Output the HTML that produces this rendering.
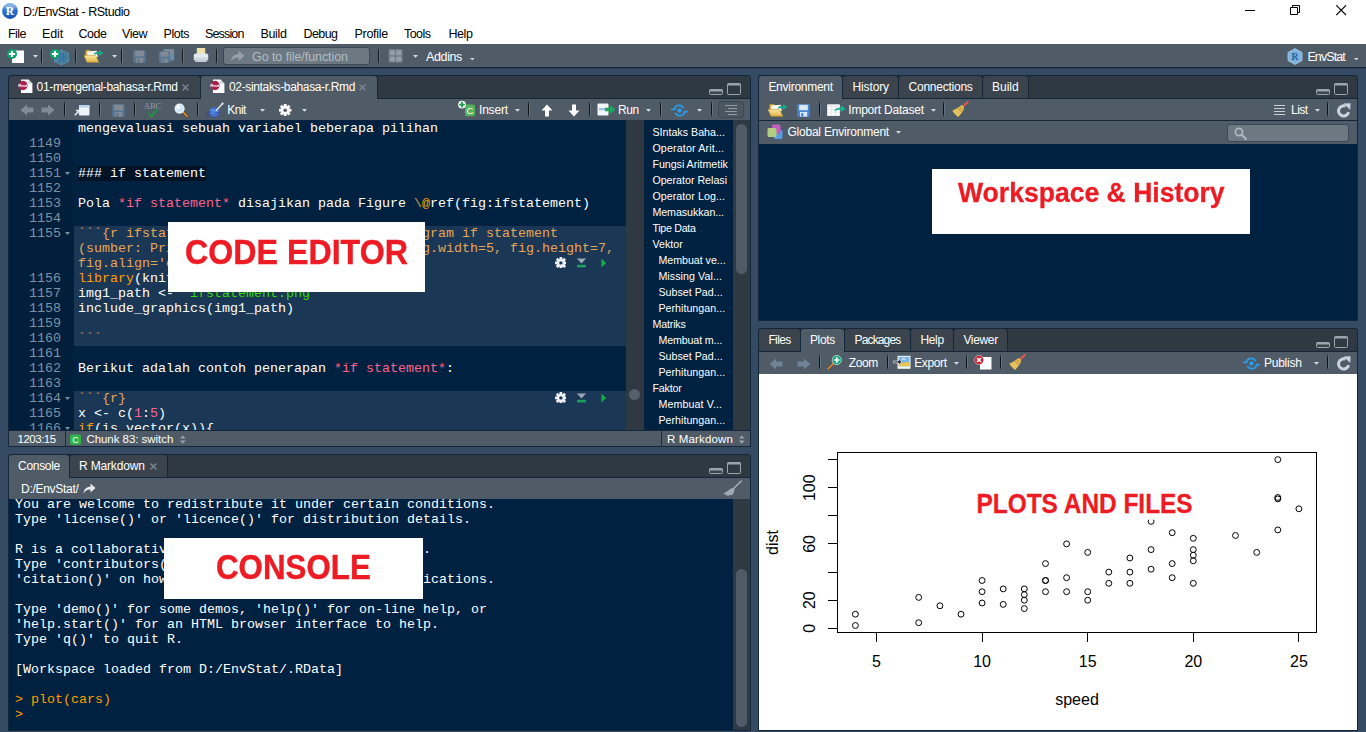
<!DOCTYPE html>
<html lang="id">
<head>
<meta charset="utf-8">
<title>D:/EnvStat - RStudio</title>
<style>
html,body{margin:0;padding:0}
body{width:1366px;height:732px;overflow:hidden;position:relative;background:#344b63;font-family:"Liberation Sans",sans-serif;font-size:12px;color:#fff}
div,span,svg{position:absolute;box-sizing:border-box}
.t{white-space:pre;line-height:16px;height:16px}
#title{left:0;top:0;width:1366px;height:22px;background:#fff;color:#000}
#menu{left:0;top:22px;width:1366px;height:22px;background:#fff;color:#000}
#tb{left:0;top:44px;width:1366px;height:24px;background:#4f5b66;border-bottom:1px solid #10243a;box-shadow:0 1px 0 #2b4058}
.sep{width:2px;height:16px;background:linear-gradient(to right,#0d1318 0,#0d1318 55%,rgba(140,160,180,.35) 55%);-webkit-mask-image:linear-gradient(transparent,#000 20%,#000 80%,transparent);mask-image:linear-gradient(transparent,#000 20%,#000 80%,transparent)}
.panel{background:#2f3941;border:1px solid #14263a;border-radius:2.5px 2.5px 0 0;overflow:hidden}
.tab{top:-1px;height:23px;background:#3b444c;border:1px solid #14263a;border-bottom:none;border-radius:4px 4px 0 0}
.tab.on{background:#4f5b66;height:24px;z-index:2}
.bar{left:0;background:#4f5b66;border-top:1px solid #14263a}
.mono{font-family:"Liberation Mono",monospace;font-size:13.33px;white-space:pre;line-height:15px;height:15px}
.ed{background:#002240;overflow:hidden}
.ln{color:#7f92a3;left:0;width:50px;text-align:right}
.c{left:69px}
.o{color:#e8a556}.k{color:#ff9d00}.p{color:#ff628c}.g{color:#3ad900}
.o,.k,.p,.g,.h,.d{position:static}
.chunk{left:65px;width:552px;background:#1a3755}
.lab{background:#fff;color:#ed1c24;font-weight:bold;text-align:center;white-space:pre}
</style>
</head>
<body>
<div id="title">
<svg style="left:2px;top:3px" width="17" height="17" viewBox="0 0 17 17"><defs><linearGradient id="rg" x1="0" y1="0" x2="0" y2="1"><stop offset="0" stop-color="#7fb6ee"/><stop offset="0.45" stop-color="#2f74d0"/><stop offset="1" stop-color="#1a4fae"/></linearGradient></defs><circle cx="8" cy="8" r="7.9" fill="url(#rg)"/><ellipse cx="8" cy="4.2" rx="5.6" ry="3" fill="#fff" fill-opacity=".22"/><text x="8" y="12.2" text-anchor="middle" font-family="Liberation Serif,serif" font-weight="bold" font-size="11.5" fill="#fff">R</text></svg>
<span class="t" style="left:23px;top:4px;font-size:12.5px;letter-spacing:-0.44px;">D:/EnvStat - RStudio</span>
<svg style="left:1245px;top:4px" width="12" height="12"><path d="M0 6.5H10" stroke="#000" fill="none"/></svg>
<svg style="left:1290px;top:4px" width="12" height="12"><path d="M0.5 3.5H7.5V10.5H0.5ZM2.5 3.5V1.5H9.5V8.5H7.5" stroke="#000" fill="none"/></svg>
<svg style="left:1336px;top:5px" width="11" height="11"><path d="M0.3 0.3L10 10M10 0.3L0.3 10" stroke="#000" fill="none" stroke-width="1.1"/></svg>
</div>
<div id="menu">
<span class="t" style="left:8px;top:4px;font-size:12.5px;letter-spacing:-0.54px;">File</span>
<span class="t" style="left:42px;top:4px;font-size:12.5px;letter-spacing:-0.13px;">Edit</span>
<span class="t" style="left:78.5px;top:4px;font-size:12.5px;letter-spacing:-0.47px;">Code</span>
<span class="t" style="left:122px;top:4px;font-size:12.5px;letter-spacing:-0.47px;">View</span>
<span class="t" style="left:163.5px;top:4px;font-size:12.5px;letter-spacing:-0.46px;">Plots</span>
<span class="t" style="left:205px;top:4px;font-size:12.5px;letter-spacing:-0.85px;">Session</span>
<span class="t" style="left:260.5px;top:4px;font-size:12.5px;letter-spacing:-0.36px;">Build</span>
<span class="t" style="left:303.5px;top:4px;font-size:12.5px;letter-spacing:-0.57px;">Debug</span>
<span class="t" style="left:354.5px;top:4px;font-size:12.5px;letter-spacing:-0.28px;">Profile</span>
<span class="t" style="left:404px;top:4px;font-size:12.5px;letter-spacing:-0.54px;">Tools</span>
<span class="t" style="left:448.5px;top:4px;font-size:12.5px;letter-spacing:-0.43px;">Help</span>
</div>
<div id="tb">
<svg style="left:7px;top:5px" width="18" height="15" viewBox="0 0 18 15"><rect x="5" y="1.5" width="12" height="12.5" fill="#fff"/><circle cx="5" cy="5" r="5" fill="#0fa36b"/><path d="M5 1.9V8.1M1.9 5H8.1" stroke="#fff" stroke-width="1.9"/></svg>
<svg style="left:33px;top:11px" width="5" height="3"><path d="M0 0H5L2.5 2.7Z" fill="#e6e9ec" fill-opacity=".9"/></svg>
<div class="sep" style="left:41px;top:4px;height:16px"></div>
<svg style="left:49px;top:5px" width="21" height="17" viewBox="0 0 21 17"><path d="M12.5 1L19.5 4V12.4L12.5 15.8L5.5 12.4V4Z" fill="#3f9ccb" fill-opacity="0.45" stroke="#58aed6" stroke-opacity="0.8" stroke-width="0.7"/><path d="M5.5 4L12.5 7.2L19.5 4M12.5 7.2V15.8M5.5 12.4L12.5 9.4L19.5 12.4M12.5 1V9.4" stroke="#58aed6" stroke-opacity="0.55" stroke-width="0.6" fill="none"/><text x="9.8" y="12.2" font-family="Liberation Serif,serif" font-size="9.5" fill="#2a67b0">R</text><circle cx="6" cy="5" r="5" fill="#0fa36b"/><path d="M6 1.9V8.1M2.9 5H9.1" stroke="#fff" stroke-width="1.9"/></svg>
<div class="sep" style="left:75px;top:4px;height:16px"></div>
<svg style="left:83px;top:5px" width="21" height="14" viewBox="0 0 21 14"><defs><linearGradient id="fg83" x1="0" y1="0" x2="0" y2="1"><stop offset="0" stop-color="#f8e9a0"/><stop offset="1" stop-color="#e2b644"/></linearGradient></defs><path d="M2.6 2.2Q2.6 1.2 3.6 1.2H7L8.4 2.6H14V9H2.6Z" fill="#d9b24a" stroke="#b98f28" stroke-width="0.5"/><path d="M4.2 2.4L13.6 1.8L14.8 8H4.2Z" fill="#f6f6f2"/><path d="M1 6.4H12.6L15.8 13.2H4Z" fill="url(#fg83)" stroke="#c29a30" stroke-width="0.6"/><path d="M10.6 5.4C11.2 3.4 13.4 2.6 16 2.8V0.9L20.6 4L16 7.2V5.1C13.8 4.8 12 5.2 10.6 5.4Z" fill="#19a884"/></svg>
<svg style="left:112px;top:11px" width="5" height="3"><path d="M0 0H5L2.5 2.7Z" fill="#e6e9ec" fill-opacity=".9"/></svg>
<div class="sep" style="left:121px;top:4px;height:16px"></div>
<svg style="opacity:.85;left:133px;top:6px" width="13" height="13" viewBox="0 0 13 13"><path d="M0.3 1.3Q0.3 0.3 1.3 0.3H11.7Q12.7 0.3 12.7 1.3V11.7Q12.7 12.7 11.7 12.7H1.3Q0.3 12.7 0.3 11.7Z" fill="#5a7b9a"/><rect x="2.2" y="0.8" width="8.6" height="5.4" fill="#8b949d"/><rect x="3" y="8" width="7.2" height="4.7" fill="#8b949d"/><rect x="4.2" y="9" width="2.2" height="3.7" fill="#5a7b9a"/></svg>
<svg style="left:158px;top:4px;opacity:.85" width="17" height="15" viewBox="0 0 17 15"><rect x="5.6" y="1" width="10.6" height="11.4" rx="1" fill="#6a9ab8"/><rect x="7.4" y="1.6" width="7.6" height="4.6" fill="#8b949d"/><path d="M0.8 4.3Q0.8 3.3 1.8 3.3H11.2Q12.2 3.3 12.2 4.3V13.7Q12.2 14.7 11.2 14.7H1.8Q0.8 14.7 0.8 13.7Z" fill="#5a7b9a"/><rect x="2.6" y="3.8" width="7.8" height="4.8" fill="#8b949d"/><rect x="3.2" y="10.4" width="6.6" height="4.3" fill="#8b949d"/><rect x="4.2" y="11.2" width="2" height="3.5" fill="#5a7b9a"/></svg>
<div class="sep" style="left:182px;top:4px;height:16px"></div>
<svg style="left:193px;top:3px" width="16" height="16" viewBox="0 0 16 16"><rect x="3.8" y="1" width="8.4" height="7.4" fill="#f1e2ac"/><rect x="0.8" y="6.4" width="14.4" height="7" rx="1.8" fill="#e3e8ee"/><rect x="0.8" y="10.6" width="14.4" height="2.8" rx="1.2" fill="#cfd6de"/><rect x="2.2" y="13.2" width="11.6" height="1.8" rx="0.6" fill="#c3cbd5"/></svg>
<div class="sep" style="left:216px;top:4px;height:16px"></div>
<div style="left:223px;top:3px;width:147px;height:18px;background:#6c7882;border:1px solid #3c4852;border-radius:3px"></div>
<svg style="left:230px;top:5px" width="15" height="14" viewBox="0 0 14 12"><path d="M1 11C1.5 6.5 4 4.3 8 4.3V1L13.5 5.8L8 10.6V7.4C5 7.4 3 8.3 1 11Z" fill="#98a2ad"/></svg>
<span class="t" style="left:252px;top:5px;font-size:12.5px;letter-spacing:-0.07px;color:#b3bcc4;">Go to file/function</span>
<div class="sep" style="left:378px;top:4px;height:16px"></div>
<svg style="left:388px;top:5px" width="15" height="14" viewBox="0 0 15 14"><rect x="0.5" y="0" width="14.2" height="13.8" rx="1" fill="#6e7a85"/><g fill="#939ea8"><rect x="1.8" y="1.4" width="5" height="4.8"/><rect x="8.2" y="1.4" width="5" height="4.8"/><rect x="1.8" y="7.6" width="5" height="4.8"/><rect x="8.2" y="7.6" width="5" height="4.8"/></g></svg>
<svg style="left:413px;top:11px" width="5" height="3"><path d="M0 0H5L2.5 2.7Z" fill="#e6e9ec" fill-opacity=".9"/></svg>
<span class="t" style="left:426px;top:5px;font-size:12.5px;letter-spacing:-0.37px;">Addins</span>
<svg style="left:470.2px;top:13.6px" width="5" height="3"><path d="M0 0H4.6L2.3 2.3Z" fill="#e6e9ec" fill-opacity=".9"/></svg>
<svg style="left:1287px;top:4px" width="16" height="17" viewBox="0 0 16 17"><path d="M8 0.6L15 4.4V12.6L8 16.4L1 12.6V4.4Z" fill="#7fb2dd" stroke="#a9cdea" stroke-width="0.8"/><text x="8" y="12" text-anchor="middle" font-family="Liberation Serif,serif" font-weight="bold" font-size="9.5" fill="#1f5f9e">R</text></svg>
<span class="t" style="left:1307.4px;top:5px;font-size:12.5px;letter-spacing:-0.90px;">EnvStat</span>
<svg style="left:1354.2px;top:13.6px" width="5" height="3"><path d="M0 0H4.6L2.3 2.3Z" fill="#e6e9ec" fill-opacity=".9"/></svg>
</div>
<div id="src" class="panel" style="left:8px;top:75px;width:743px;height:372px">
<div class="tab" style="left:-1px;width:193px"><svg style="left:9px;top:3px" width="16" height="16" viewBox="0 0 16 16"><path d="M3 0.4H10.5L14.4 4.4V14H3Z" fill="#fff"/><path d="M10.5 0.4V4.4H14.4Z" fill="#c9ced3"/><circle cx="5" cy="6.5" r="4.7" fill="#a8234f"/><text x="5" y="8" text-anchor="middle" font-size="4.2" font-weight="bold" fill="#fff" font-family="Liberation Sans,sans-serif">Rmd</text></svg><span class="t" style="left:27.6px;top:2.5px;font-size:12px;letter-spacing:-0.35px;">01-mengenal-bahasa-r.Rmd</span><svg style="left:172.5px;top:8px" width="7" height="7"><path d="M0.5 0.5L6.5 6.5M6.5 0.5L0.5 6.5" stroke="#7b8792" stroke-width="1.4"/></svg></div>
<div class="tab on" style="left:191px;width:178px"><svg style="left:9px;top:3px" width="16" height="16" viewBox="0 0 16 16"><path d="M3 0.4H10.5L14.4 4.4V14H3Z" fill="#fff"/><path d="M10.5 0.4V4.4H14.4Z" fill="#c9ced3"/><circle cx="5" cy="6.5" r="4.7" fill="#a8234f"/><text x="5" y="8" text-anchor="middle" font-size="4.2" font-weight="bold" fill="#fff" font-family="Liberation Sans,sans-serif">Rmd</text></svg><span class="t" style="left:28px;top:2.5px;font-size:12px;letter-spacing:-0.35px;">02-sintaks-bahasa-r.Rmd</span><svg style="left:158.0px;top:8px" width="7" height="7"><path d="M0.5 0.5L6.5 6.5M6.5 0.5L0.5 6.5" stroke="#7b8792" stroke-width="1.4"/></svg></div>
<svg style="left:700px;top:13px" width="14" height="6"><rect x="0.5" y="0.5" width="13" height="5" rx="1" fill="#3b444c" stroke="#9aa4ad"/><rect x="0.5" y="0.5" width="13" height="2" fill="#9aa4ad"/></svg><svg style="left:718px;top:7px" width="14" height="12"><rect x="0.5" y="0.5" width="13" height="11" rx="1" fill="#2f3941" stroke="#9aa4ad"/><rect x="0.5" y="0.5" width="13" height="2" fill="#9aa4ad"/></svg>
<div class="bar" style="top:22px;width:741px;height:22px">
<svg style="left:11px;top:5px" width="14" height="12" viewBox="0 0 14 12"><path d="M0.5 6L7 0.5V3.5H13.5V8.5H7V11.5Z" fill="#7f8b96"/></svg>
<svg style="left:32px;top:5px" width="14" height="12" viewBox="0 0 14 12"><path d="M13.5 6L7 0.5V3.5H0.5V8.5H7V11.5Z" fill="#7f8b96"/></svg>
<div class="sep" style="left:55px;top:2px;height:16px"></div>
<svg style="left:65px;top:5px" width="16" height="13" viewBox="0 0 16 13"><rect x="5" y="1" width="10.5" height="10.5" rx="1" fill="#eef3f8"/><rect x="5" y="1" width="10.5" height="2.5" rx="1" fill="#b9d3ea"/><path d="M0.8 11.2L5.2 6.8M2 6.5H5.5V10" stroke="#e9edf0" stroke-width="1.5" fill="none"/></svg>
<div class="sep" style="left:90px;top:2px;height:16px"></div>
<svg style="opacity:.85;left:103px;top:5px" width="13" height="13" viewBox="0 0 13 13"><path d="M0.3 1.3Q0.3 0.3 1.3 0.3H11.7Q12.7 0.3 12.7 1.3V11.7Q12.7 12.7 11.7 12.7H1.3Q0.3 12.7 0.3 11.7Z" fill="#5a7b9a"/><rect x="2.2" y="0.8" width="8.6" height="5.4" fill="#8b949d"/><rect x="3" y="8" width="7.2" height="4.7" fill="#8b949d"/><rect x="4.2" y="9" width="2.2" height="3.7" fill="#5a7b9a"/></svg>
<div class="sep" style="left:125px;top:2px;height:16px"></div>
<svg style="left:134px;top:1px" width="19" height="20" viewBox="0 0 19 20"><text x="9.5" y="8.5" text-anchor="middle" font-family="Liberation Serif,serif" font-size="8.5" fill="#8f9aa4">ABC</text><path d="M5.5 13L8.5 16.5L14 9.5" stroke="#1a9b3c" stroke-width="1.8" fill="none"/></svg>
<svg style="left:165px;top:4px" width="15" height="15" viewBox="0 0 15 15"><path d="M8.5 8.5L13.3 13.3" stroke="#5a3a1a" stroke-width="3" stroke-linecap="round"/><path d="M8.5 8.5L13.3 13.3" stroke="#d08a3a" stroke-width="1.8" stroke-linecap="round"/><circle cx="5.6" cy="5.6" r="4.5" fill="#cfe6fb" stroke="#eef4fa" stroke-width="1.2"/><circle cx="4.4" cy="4.2" r="1.8" fill="#fff"/></svg>
<div class="sep" style="left:188px;top:2px;height:16px"></div>
<svg style="left:195px;top:2px" width="21" height="18" viewBox="0 0 21 18"><defs><radialGradient id="yb" cx="0.4" cy="0.35" r="0.75"><stop offset="0" stop-color="#4f8ae6"/><stop offset="1" stop-color="#1f3f9e"/></radialGradient></defs><path d="M5.2 11.6C2.6 11 2.4 13 4 13.6C5.6 14.2 4.6 16 2.6 15.8" stroke="#2b3fa6" stroke-width="0.9" fill="none"/><circle cx="10.5" cy="11.2" r="5.3" fill="url(#yb)"/><path d="M5.8 9.4C8.6 7.6 12.4 11.8 15.4 9.6M5.6 12.4C8.4 10.4 12 15 15.2 12.8M7 14.8C9.4 13.6 11.6 16.2 13.6 15.2" stroke="#7fb0f0" stroke-opacity=".7" stroke-width="0.8" fill="none"/><path d="M12.2 9.4L18.4 2.8" stroke="#dfe5ea" stroke-width="1.4" stroke-linecap="round"/><circle cx="18.6" cy="2.6" r="1.1" fill="#eef2f5"/></svg>
<span class="t" style="left:218.2px;top:3px;font-size:12px;letter-spacing:-0.49px;">Knit</span>
<svg style="left:251px;top:10px" width="5" height="3"><path d="M0 0H5L2.5 2.7Z" fill="#e6e9ec" fill-opacity=".9"/></svg>
<svg style="left:270.2px;top:4.6px" width="12.4" height="12.4" viewBox="-6.5 -6.5 13 13"><rect x="-1.5" y="-6.5" width="3" height="13" transform="rotate(0)" fill="#fff"/><rect x="-1.5" y="-6.5" width="3" height="13" transform="rotate(45)" fill="#fff"/><rect x="-1.5" y="-6.5" width="3" height="13" transform="rotate(90)" fill="#fff"/><rect x="-1.5" y="-6.5" width="3" height="13" transform="rotate(135)" fill="#fff"/><circle r="4.6" fill="#fff"/><circle r="1.9" fill="#4f5b66" class="gh"/></svg>
<svg style="left:293px;top:10px" width="5" height="3"><path d="M0 0H5L2.5 2.7Z" fill="#e6e9ec" fill-opacity=".9"/></svg>
<svg style="left:449px;top:1px" width="18" height="17" viewBox="0 0 18 17"><rect x="7" y="4.6" width="10" height="11.6" rx="1.8" fill="#56b25a"/><text x="12" y="14" text-anchor="middle" font-size="9.5" fill="#fff" font-family="Liberation Sans,sans-serif">C</text><circle cx="4" cy="4.6" r="3.9" fill="#f4faf6"/><path d="M4 1.8V7.4M1.2 4.6H6.8" stroke="#169c4a" stroke-width="1.7"/></svg>
<span class="t" style="left:470px;top:3px;font-size:12px;letter-spacing:-0.20px;">Insert</span>
<svg style="left:506px;top:10px" width="5" height="3"><path d="M0 0H5L2.5 2.7Z" fill="#e6e9ec" fill-opacity=".9"/></svg>
<div class="sep" style="left:519px;top:2px;height:16px"></div>
<svg style="left:532px;top:5px" width="12" height="13" viewBox="0 0 12 13"><path d="M6 0.5L11.5 6.5H8V12.5H4V6.5H0.5Z" fill="#fff"/></svg>
<svg style="left:559px;top:5px" width="12" height="13" viewBox="0 0 12 13"><path d="M6 12.5L11.5 6.5H8V0.5H4V6.5H0.5Z" fill="#fff"/></svg>
<div class="sep" style="left:580px;top:2px;height:16px"></div>
<svg style="left:588px;top:4px" width="19" height="13" viewBox="0 0 19 13"><rect x="0.5" y="0.5" width="11" height="12" rx="1" fill="#f4f7fa"/><rect x="2" y="5" width="6" height="2.4" fill="#9fc3ea"/><path d="M8 4.8H13V2L18.5 6.5L13 11V8.2H8Z" fill="#1fa65a"/></svg>
<span class="t" style="left:609px;top:3px;font-size:12px;letter-spacing:-0.47px;">Run</span>
<svg style="left:637px;top:10px" width="5" height="3"><path d="M0 0H5L2.5 2.7Z" fill="#e6e9ec" fill-opacity=".9"/></svg>
<div class="sep" style="left:651px;top:2px;height:16px"></div>
<svg style="left:662px;top:5px" width="17" height="13" viewBox="0 0 17 13"><path d="M3.2 5.2A5 5 0 0 1 12.6 4.2M13.8 7.8A5 5 0 0 1 4.4 8.8" fill="none" stroke="#2a9be6" stroke-width="1.7"/><path d="M0 5.4H4.5M12.5 7.6H17" stroke="#2a9be6" stroke-width="1.7"/><circle cx="8.5" cy="6.5" r="2.2" fill="#2a9be6"/></svg>
<svg style="left:688px;top:10px" width="5" height="3"><path d="M0 0H5L2.5 2.7Z" fill="#e6e9ec" fill-opacity=".9"/></svg>
<div class="sep" style="left:702px;top:2px;height:16px"></div>
<div style="left:709px;top:2px;width:26px;height:17px;border:1px solid #3c4852;border-radius:3px;background:#4a5660"></div>
<svg style="left:716px;top:6px" width="12" height="10"><path d="M0 0.5H12M3 3.5H12M0 6.5H12M3 9.5H12" stroke="#8f9aa4" stroke-width="1"/></svg>
</div>
<div class="ed" style="left:0;top:44px;width:741px;height:310px">
<div style="left:0;top:0;width:65px;height:311px;background:#011e3a"></div>
<div class="chunk" style="top:106px;height:120px"></div>
<div class="chunk" style="top:271px;height:45px"></div>
<span class="mono c" style="top:1px">mengevaluasi sebuah variabel beberapa pilihan</span>
<span class="mono ln" style="top:16px;width:52px">1149</span>
<span class="mono ln" style="top:31px;width:52px">1150</span>
<span class="mono ln" style="top:46px;width:52px">1151</span>
<svg style="left:56px;top:52px" width="5" height="3"><path d="M0 0H5L2.5 3Z" fill="#7f92a3"/></svg>
<span class="mono c" style="top:46px"><span class="h" style="background:#001325">### if statement</span></span>
<span class="mono ln" style="top:61px;width:52px">1152</span>
<span class="mono ln" style="top:76px;width:52px">1153</span>
<span class="mono c" style="top:76px">Pola <span class="p">*if statement*</span> disajikan pada Figure <span class="d" style="color:#c79a5a">\</span><span class="k">@</span>ref(fig:ifstatement)</span>
<span class="mono ln" style="top:91px;width:52px">1154</span>
<span class="mono ln" style="top:106px;width:52px">1155</span>
<svg style="left:56px;top:112px" width="5" height="3"><path d="M0 0H5L2.5 3Z" fill="#7f92a3"/></svg>
<span class="mono c" style="top:106px"><span class="o">```{r ifstatement, fig.cap='Bentuk alur diagram if statement</span></span>
<span class="mono c" style="top:121px"><span class="o">(sumber: Primartha, 2018).', echo=FALSE, fig.width=5, fig.height=7,</span></span>
<span class="mono c" style="top:136px"><span class="o">fig.align='center', message=FALSE}</span></span>
<span class="mono ln" style="top:151px;width:52px">1156</span>
<span class="mono c" style="top:151px"><span class="k">library</span>(knitr)</span>
<span class="mono ln" style="top:166px;width:52px">1157</span>
<span class="mono c" style="top:166px">img1_path &lt;- <span class="g">"ifstatement.png"</span></span>
<span class="mono ln" style="top:181px;width:52px">1158</span>
<span class="mono c" style="top:181px">include_graphics(img1_path)</span>
<span class="mono ln" style="top:196px;width:52px">1159</span>
<span class="mono ln" style="top:211px;width:52px">1160</span>
<span class="mono c" style="top:211px"><span class="o">```</span></span>
<span class="mono ln" style="top:226px;width:52px">1161</span>
<span class="mono ln" style="top:241px;width:52px">1162</span>
<span class="mono c" style="top:241px">Berikut adalah contoh penerapan <span class="p">*if statement*</span>:</span>
<span class="mono ln" style="top:256px;width:52px">1163</span>
<span class="mono ln" style="top:271px;width:52px">1164</span>
<svg style="left:56px;top:277px" width="5" height="3"><path d="M0 0H5L2.5 3Z" fill="#7f92a3"/></svg>
<span class="mono c" style="top:271px"><span class="o">```{r}</span></span>
<span class="mono ln" style="top:286px;width:52px">1165</span>
<span class="mono c" style="top:286px">x &lt;- c(<span class="p">1</span>:<span class="p">5</span>)</span>
<span class="mono ln" style="top:301px;width:52px">1166</span>
<svg style="left:56px;top:307px" width="5" height="3"><path d="M0 0H5L2.5 3Z" fill="#7f92a3"/></svg>
<span class="mono c" style="top:301px"><span class="k">if</span>(is.vector(x)){</span>
<svg style="left:545.5px;top:136.5px" width="11.8" height="11.8" viewBox="-6.5 -6.5 13 13"><rect x="-1.5" y="-6.5" width="3" height="13" transform="rotate(0)" fill="#eef1f3"/><rect x="-1.5" y="-6.5" width="3" height="13" transform="rotate(45)" fill="#eef1f3"/><rect x="-1.5" y="-6.5" width="3" height="13" transform="rotate(90)" fill="#eef1f3"/><rect x="-1.5" y="-6.5" width="3" height="13" transform="rotate(135)" fill="#eef1f3"/><circle r="4.6" fill="#eef1f3"/><circle r="1.9" fill="#1a3755" class="gh"/></svg>
<svg style="left:567px;top:137.5px" width="11" height="11"><path d="M0.9 0.6H10.1L5.5 5.6Z" fill="#9aa8b5"/><rect x="1" y="6.8" width="9" height="2.6" fill="#1a9e5c"/></svg>
<svg style="left:592px;top:137.5px" width="7" height="11"><path d="M0.4 0.6L5.2 5L0.4 9.4Z" fill="#14ad48"/></svg>
<svg style="left:545.5px;top:271.5px" width="11.8" height="11.8" viewBox="-6.5 -6.5 13 13"><rect x="-1.5" y="-6.5" width="3" height="13" transform="rotate(0)" fill="#eef1f3"/><rect x="-1.5" y="-6.5" width="3" height="13" transform="rotate(45)" fill="#eef1f3"/><rect x="-1.5" y="-6.5" width="3" height="13" transform="rotate(90)" fill="#eef1f3"/><rect x="-1.5" y="-6.5" width="3" height="13" transform="rotate(135)" fill="#eef1f3"/><circle r="4.6" fill="#eef1f3"/><circle r="1.9" fill="#1a3755" class="gh"/></svg>
<svg style="left:567px;top:272.5px" width="11" height="11"><path d="M0.9 0.6H10.1L5.5 5.6Z" fill="#9aa8b5"/><rect x="1" y="6.8" width="9" height="2.6" fill="#1a9e5c"/></svg>
<svg style="left:592px;top:272.5px" width="7" height="11"><path d="M0.4 0.6L5.2 5L0.4 9.4Z" fill="#14ad48"/></svg>
<div style="left:617px;top:0;width:18px;height:311px;background:#2f3941"></div>
<div style="left:620px;top:269px;width:11px;height:11px;border-radius:5.5px;background:#53606b"></div>
<span class="t" style="left:643.4px;top:4px;font-size:10.67px;letter-spacing:0.02px;">SIntaks Baha...</span>
<span class="t" style="left:643.4px;top:20px;font-size:10.67px;letter-spacing:0.16px;">Operator Arit...</span>
<span class="t" style="left:643.4px;top:36px;font-size:10.67px;letter-spacing:-0.02px;">Fungsi Aritmetik</span>
<span class="t" style="left:643.4px;top:52px;font-size:10.67px;letter-spacing:-0.00px;">Operator Relasi</span>
<span class="t" style="left:643.4px;top:68px;font-size:10.67px;letter-spacing:0.06px;">Operator Log...</span>
<span class="t" style="left:643.4px;top:84px;font-size:10.67px;letter-spacing:-0.05px;">Memasukkan...</span>
<span class="t" style="left:643.4px;top:100px;font-size:10.67px;letter-spacing:-0.28px;">Tipe Data</span>
<span class="t" style="left:643.4px;top:116px;font-size:10.67px;letter-spacing:0.04px;">Vektor</span>
<span class="t" style="left:649.4px;top:132px;font-size:10.67px;letter-spacing:-0.02px;">Membuat ve...</span>
<span class="t" style="left:649.4px;top:148px;font-size:10.67px;letter-spacing:0.08px;">Missing Val...</span>
<span class="t" style="left:649.4px;top:164px;font-size:10.67px;letter-spacing:0.03px;">Subset Pad...</span>
<span class="t" style="left:649.4px;top:180px;font-size:10.67px;letter-spacing:0.03px;">Perhitungan...</span>
<span class="t" style="left:643.4px;top:196px;font-size:10.67px;letter-spacing:-0.14px;">Matriks</span>
<span class="t" style="left:649.4px;top:212px;font-size:10.67px;letter-spacing:-0.12px;">Membuat m...</span>
<span class="t" style="left:649.4px;top:228px;font-size:10.67px;letter-spacing:0.03px;">Subset Pad...</span>
<span class="t" style="left:649.4px;top:244px;font-size:10.67px;letter-spacing:0.03px;">Perhitungan...</span>
<span class="t" style="left:643.4px;top:260px;font-size:10.67px;letter-spacing:-0.16px;">Faktor</span>
<span class="t" style="left:649.4px;top:276px;font-size:10.67px;letter-spacing:0.11px;">Membuat V...</span>
<span class="t" style="left:649.4px;top:292px;font-size:10.67px;letter-spacing:0.03px;">Perhitungan...</span>
<div style="left:724px;top:0;width:17px;height:311px;background:#2f3941"></div>
<div style="left:726.8px;top:4px;width:11.2px;height:150px;border-radius:5.6px;background:#4f5b66"></div>
</div>
<div class="bar" style="top:354px;width:741px;height:17px;border-bottom:1px solid #14263a">
<span class="t" style="left:8.6px;top:0px;font-size:11.5px;letter-spacing:-0.51px;">1203:15</span>
<div style="left:56px;top:0;width:1px;height:16px;background:#1b2a39"></div>
<svg style="left:61px;top:2.5px" width="11" height="11"><rect x="0" y="0.4" width="11" height="10.4" rx="1.8" fill="#2fb44a"/><text x="5.5" y="8.9" text-anchor="middle" font-size="8.8" fill="#fff" font-family="Liberation Sans,sans-serif">C</text></svg>
<span class="t" style="left:77.4px;top:0px;font-size:11.5px;letter-spacing:-0.04px;">Chunk 83: switch</span>
<svg style="left:170.8px;top:3.5px" width="6" height="10"><path d="M0 3.6H5.6L2.8 0.4Z" fill="#9aa4ad"/><path d="M0 5.6H5.6L2.8 8.8Z" fill="#9aa4ad"/></svg>
<div style="left:652px;top:0;width:1px;height:16px;background:#1b2a39"></div>
<span class="t" style="left:658px;top:0px;font-size:11.5px;letter-spacing:0.15px;">R Markdown</span>
<svg style="left:729.8px;top:3.5px" width="6" height="10"><path d="M0 3.6H5.6L2.8 0.4Z" fill="#9aa4ad"/><path d="M0 5.6H5.6L2.8 8.8Z" fill="#9aa4ad"/></svg>
</div>
</div>
<div id="con" class="panel" style="left:8px;top:454px;width:743px;height:277px">
<div class="tab on" style="left:-1px;width:62px"><span class="t" style="left:9px;top:2.5px;font-size:12px;letter-spacing:-0.29px;">Console</span></div>
<div class="tab" style="left:60px;width:99px"><span class="t" style="left:9px;top:2.5px;font-size:12px;letter-spacing:-0.17px;">R Markdown</span><svg style="left:79.9px;top:8px" width="7" height="7"><path d="M0.5 0.5L6.5 6.5M6.5 0.5L0.5 6.5" stroke="#7b8792" stroke-width="1.4"/></svg></div>
<svg style="left:700px;top:13px" width="14" height="6"><rect x="0.5" y="0.5" width="13" height="5" rx="1" fill="#3b444c" stroke="#9aa4ad"/><rect x="0.5" y="0.5" width="13" height="2" fill="#9aa4ad"/></svg><svg style="left:718px;top:7px" width="14" height="12"><rect x="0.5" y="0.5" width="13" height="11" rx="1" fill="#2f3941" stroke="#9aa4ad"/><rect x="0.5" y="0.5" width="13" height="2" fill="#9aa4ad"/></svg>
<div class="bar" style="top:22px;width:741px;height:22px">
<span class="t" style="left:12px;top:3px;font-size:12px;letter-spacing:-0.29px;">D:/EnvStat/</span>
<svg style="left:74px;top:5px" width="13" height="11" viewBox="0 0 13 11"><path d="M0.5 10.5C1 6 3.5 3.8 7.5 3.8V0.5L12.5 5L7.5 9.5V6.6C4.5 6.6 2.5 7.6 0.5 10.5Z" fill="#e6e9ec"/></svg>
<svg style="left:714px;top:1px" width="20" height="18" viewBox="0 0 20 18"><path d="M18.3 2L10.6 9.5" stroke="#a9b3bc" stroke-width="1.4" stroke-linecap="round"/><path d="M8.4 9.1L11.7 10.2C11.4 12.4 10.6 14.2 9.6 15.7L4.6 16.7L0.3 14.4C3.4 13 6.4 11 8.4 9.1Z" fill="#9ea9b3"/></svg>
</div>
<div class="ed" style="left:0;top:44px;width:741px;height:231px">
<span class="mono" style="left:6px;top:-2.5px">You are welcome to redistribute it under certain conditions.</span>
<span class="mono" style="left:6px;top:12.5px">Type 'license()' or 'licence()' for distribution details.</span>
<span class="mono" style="left:6px;top:42.5px">R is a collaborative project with many contributors.</span>
<span class="mono" style="left:6px;top:57.5px">Type 'contributors()' for more information and</span>
<span class="mono" style="left:6px;top:72.5px">'citation()' on how to cite R or R packages in publications.</span>
<span class="mono" style="left:6px;top:102.5px">Type 'demo()' for some demos, 'help()' for on-line help, or</span>
<span class="mono" style="left:6px;top:117.5px">'help.start()' for an HTML browser interface to help.</span>
<span class="mono" style="left:6px;top:132.5px">Type 'q()' to quit R.</span>
<span class="mono" style="left:6px;top:162.5px">[Workspace loaded from D:/EnvStat/.RData]</span>
<span class="mono" style="left:6px;top:192.5px"><span class="k">&gt; plot(cars)</span></span>
<span class="mono" style="left:6px;top:207.5px"><span class="k">&gt; </span></span>
<div style="left:724px;top:0;width:17px;height:231px;background:#2f3941"></div>
<div style="left:726.8px;top:69.5px;width:11.2px;height:158px;border-radius:5.6px;background:#4f5b66"></div>
</div>
</div>
<div id="env" class="panel" style="left:758px;top:75px;width:600px;height:246px">
<div class="tab on" style="left:-1px;width:85px"><span class="t" style="left:9.399999999999977px;top:2.5px;font-size:12px;letter-spacing:-0.27px;">Environment</span></div>
<div class="tab" style="left:83px;width:57px"><span class="t" style="left:9.5px;top:2.5px;font-size:12px;letter-spacing:-0.12px;">History</span></div>
<div class="tab" style="left:139px;width:85px"><span class="t" style="left:9.600000000000023px;top:2.5px;font-size:12px;letter-spacing:-0.25px;">Connections</span></div>
<div class="tab" style="left:223px;width:47px"><span class="t" style="left:9px;top:2.5px;font-size:12px;letter-spacing:0.00px;">Build</span></div>
<svg style="left:557px;top:13px" width="14" height="6"><rect x="0.5" y="0.5" width="13" height="5" rx="1" fill="#3b444c" stroke="#9aa4ad"/><rect x="0.5" y="0.5" width="13" height="2" fill="#9aa4ad"/></svg><svg style="left:575px;top:7px" width="14" height="12"><rect x="0.5" y="0.5" width="13" height="11" rx="1" fill="#2f3941" stroke="#9aa4ad"/><rect x="0.5" y="0.5" width="13" height="2" fill="#9aa4ad"/></svg>
<div class="bar" style="top:22px;width:598px;height:22px">
<svg style="left:8px;top:4px" width="21" height="14" viewBox="0 0 21 14"><defs><linearGradient id="fg8" x1="0" y1="0" x2="0" y2="1"><stop offset="0" stop-color="#f8e9a0"/><stop offset="1" stop-color="#e2b644"/></linearGradient></defs><path d="M2.6 2.2Q2.6 1.2 3.6 1.2H7L8.4 2.6H14V9H2.6Z" fill="#d9b24a" stroke="#b98f28" stroke-width="0.5"/><path d="M4.2 2.4L13.6 1.8L14.8 8H4.2Z" fill="#f6f6f2"/><path d="M1 6.4H12.6L15.8 13.2H4Z" fill="url(#fg8)" stroke="#c29a30" stroke-width="0.6"/><path d="M10.6 5.4C11.2 3.4 13.4 2.6 16 2.8V0.9L20.6 4L16 7.2V5.1C13.8 4.8 12 5.2 10.6 5.4Z" fill="#19a884"/></svg>
<svg style="left:38px;top:5px" width="13" height="13" viewBox="0 0 13 13"><path d="M0.3 1.3Q0.3 0.3 1.3 0.3H11.7Q12.7 0.3 12.7 1.3V11.7Q12.7 12.7 11.7 12.7H1.3Q0.3 12.7 0.3 11.7Z" fill="#4a86d8"/><rect x="2.2" y="0.8" width="8.6" height="5.4" fill="#dbe8f8"/><rect x="3" y="8" width="7.2" height="4.7" fill="#dbe8f8"/><rect x="4.2" y="9" width="2.2" height="3.7" fill="#4a86d8"/></svg>
<div class="sep" style="left:60px;top:2px;height:16px"></div>
<svg style="left:68px;top:4px" width="20" height="14" viewBox="0 0 20 14"><rect x="0" y="1.2" width="13" height="11.8" rx="0.8" fill="#dfe3ea"/><rect x="0.8" y="1.8" width="11.4" height="1.6" fill="#f3f5f8"/><g fill="#fff"><rect x="1" y="4.2" width="3.2" height="2.2"/><rect x="5" y="4.2" width="3.2" height="2.2"/><rect x="9" y="4.2" width="3.2" height="2.2"/><rect x="1" y="7.2" width="3.2" height="2.2"/><rect x="5" y="7.2" width="3.2" height="2.2"/><rect x="9" y="7.2" width="3.2" height="2.2"/><rect x="1" y="10.2" width="3.2" height="2.2"/><rect x="5" y="10.2" width="3.2" height="2.2"/><rect x="9" y="10.2" width="3.2" height="2.2"/></g><path d="M7 8.6C7.6 6 10 4.6 13.8 4.8V2.2L18.6 5.8L13.8 9.2V6.9C11 6.6 9 7.2 7 8.6Z" fill="#19b38a"/></svg>
<span class="t" style="left:89.29999999999995px;top:3px;font-size:12px;letter-spacing:-0.23px;">Import Dataset</span>
<svg style="left:172px;top:10px" width="5" height="3"><path d="M0 0H5L2.5 2.7Z" fill="#e6e9ec" fill-opacity=".9"/></svg>
<div class="sep" style="left:184px;top:2px;height:16px"></div>
<svg style="left:193px;top:2px;opacity:1" width="17" height="17" viewBox="0 0 17 17"><path d="M15.7 0.9L11.2 5.2" stroke="#df5a4a" stroke-width="2.1" stroke-linecap="round"/><path d="M9.2 4.3C10.6 4.3 12.2 5.6 12 7.2C11.6 9.6 9 13 6.2 15.9C4.8 15.4 1.2 11.4 0.3 9.5C3.4 8.4 7.2 6 9.2 4.3Z" fill="#e4c15c"/><path d="M7.3 5.6L10.9 8.6M5.9 7.3L9.8 10.8" stroke="#b87a22" stroke-width="0.9"/></svg>
<svg style="left:515px;top:6px" width="12" height="11"><path d="M0 0.5H11M0 3.5H11M0 6.5H11M0 9.5H11" stroke="#c9d0d6" stroke-width="1"/></svg>
<span class="t" style="left:532px;top:3px;font-size:12px;letter-spacing:-0.49px;">List</span>
<svg style="left:556px;top:10px" width="5" height="3"><path d="M0 0H5L2.5 2.7Z" fill="#e6e9ec" fill-opacity=".9"/></svg>
<div class="sep" style="left:568px;top:2px;height:16px"></div>
<svg style="left:577px;top:4px" width="15" height="15" viewBox="0 0 15 15"><path d="M12.6 9.2A5.1 5.1 0 1 1 9.6 3.2" fill="none" stroke="#c9d3de" stroke-width="3"/><path d="M7.6 0.6L14.6 0.2L14.2 7Z" fill="#c9d3de"/></svg>
</div>
<div class="bar" style="top:44px;width:598px;height:24px">
<svg style="left:8px;top:3px" width="16" height="16" viewBox="0 0 16 16"><rect x="7" y="6" width="8.5" height="9" rx="1.5" fill="#5b9be6"/><rect x="5" y="0.5" width="8.5" height="9" rx="1.5" fill="#c45cc0"/><rect x="0.5" y="4" width="9" height="9" rx="1.5" fill="#b3cd7f"/></svg>
<span class="t" style="left:28.399999999999977px;top:3px;font-size:12px;letter-spacing:-0.21px;">Global Environment</span>
<svg style="left:137px;top:10px" width="5" height="3"><path d="M0 0H5L2.5 2.7Z" fill="#e6e9ec" fill-opacity=".9"/></svg>
<div style="left:468px;top:3px;width:122px;height:18px;background:#6c7882;border:1px solid #3c4852;border-radius:3px"></div>
<svg style="left:474.5px;top:5.5px" width="13" height="13" viewBox="0 0 13 13"><circle cx="5" cy="5" r="3.6" fill="none" stroke="#aeb7bf" stroke-width="1.7"/><path d="M7.8 7.8L12 12" stroke="#aeb7bf" stroke-width="2.2" stroke-linecap="round"/></svg>
</div>
<div class="ed" style="left:0;top:68px;width:598px;height:176px"></div>
</div>
<div id="plt" class="panel" style="left:758px;top:328px;width:600px;height:403px">
<div class="tab" style="left:-1px;width:43px"><span class="t" style="left:9.399999999999977px;top:2.5px;font-size:12px;letter-spacing:-0.63px;">Files</span></div>
<div class="tab on" style="left:41px;width:45px"><span class="t" style="left:9px;top:2.5px;font-size:12px;letter-spacing:-0.38px;">Plots</span></div>
<div class="tab" style="left:85px;width:67px"><span class="t" style="left:9.5px;top:2.5px;font-size:12px;letter-spacing:-0.85px;">Packages</span></div>
<div class="tab" style="left:151px;width:44px"><span class="t" style="left:9.399999999999977px;top:2.5px;font-size:12px;letter-spacing:-0.34px;">Help</span></div>
<div class="tab" style="left:194px;width:55px"><span class="t" style="left:9.399999999999977px;top:2.5px;font-size:12px;letter-spacing:-0.34px;">Viewer</span></div>
<svg style="left:557px;top:13px" width="14" height="6"><rect x="0.5" y="0.5" width="13" height="5" rx="1" fill="#3b444c" stroke="#9aa4ad"/><rect x="0.5" y="0.5" width="13" height="2" fill="#9aa4ad"/></svg><svg style="left:575px;top:7px" width="14" height="12"><rect x="0.5" y="0.5" width="13" height="11" rx="1" fill="#2f3941" stroke="#9aa4ad"/><rect x="0.5" y="0.5" width="13" height="2" fill="#9aa4ad"/></svg>
<div class="bar" style="top:22px;width:598px;height:23px">
<svg style="left:10px;top:6px" width="14" height="12" viewBox="0 0 14 12"><path d="M0.5 6L7 0.5V3.5H13.5V8.5H7V11.5Z" fill="#6f8296"/></svg>
<svg style="left:38.39999999999998px;top:6px" width="14" height="12" viewBox="0 0 14 12"><path d="M13.5 6L7 0.5V3.5H0.5V8.5H7V11.5Z" fill="#6f8296"/></svg>
<div class="sep" style="left:60px;top:2px;height:16px"></div>
<svg style="left:68px;top:3px" width="15" height="15" viewBox="0 0 15 15"><path d="M1 14L6.6 8.4" stroke="#6b4418" stroke-width="2.6" stroke-linecap="round"/><path d="M1 14L6.6 8.4" stroke="#d6923e" stroke-width="1.5" stroke-linecap="round"/><circle cx="9.8" cy="5" r="4.6" fill="#12a67c" stroke="#d8f0e8" stroke-width="0.7"/><path d="M9.8 2.3V7.7M7.1 5H12.5" stroke="#fff" stroke-width="1.7"/></svg>
<span class="t" style="left:89.79999999999995px;top:3px;font-size:12px;letter-spacing:-0.42px;">Zoom</span>
<div class="sep" style="left:128px;top:2px;height:16px"></div>
<svg style="left:134px;top:3px" width="18" height="15" viewBox="0 0 18 15"><rect x="4.5" y="0.8" width="13" height="13" fill="#f4f6f8"/><rect x="5.6" y="1.9" width="10.8" height="9.4" fill="#79b4ea"/><path d="M5.6 8.4C8 6.6 10 8.6 12 7.4C13.6 6.4 15 7 16.4 7.8V11.3H5.6Z" fill="#e9c54e"/><path d="M9 3.2h3.4v1.6H9z" fill="#dcecfa"/><path d="M0.4 6H5.4V3.9L9 6.9L5.4 9.9V7.8H0.4Z" fill="#1c2127" stroke="#f4f6f8" stroke-width="0.7"/></svg>
<span class="t" style="left:155.20000000000005px;top:3px;font-size:12px;letter-spacing:-0.36px;">Export</span>
<svg style="left:195px;top:10px" width="5" height="3"><path d="M0 0H5L2.5 2.7Z" fill="#e6e9ec" fill-opacity=".9"/></svg>
<div class="sep" style="left:207px;top:2px;height:16px"></div>
<svg style="left:215px;top:3px" width="18" height="15" viewBox="0 0 18 15"><rect x="6" y="2" width="11.5" height="12.5" fill="#fff"/><circle cx="5" cy="5" r="4.6" fill="#c8202f" stroke="#f0d0d2" stroke-width="0.6"/><path d="M3 3L7 7M7 3L3 7" stroke="#fff" stroke-width="1.6"/></svg>
<div class="sep" style="left:241px;top:2px;height:16px"></div>
<svg style="left:250px;top:2px;opacity:1" width="17" height="17" viewBox="0 0 17 17"><path d="M15.7 0.9L11.2 5.2" stroke="#df5a4a" stroke-width="2.1" stroke-linecap="round"/><path d="M9.2 4.3C10.6 4.3 12.2 5.6 12 7.2C11.6 9.6 9 13 6.2 15.9C4.8 15.4 1.2 11.4 0.3 9.5C3.4 8.4 7.2 6 9.2 4.3Z" fill="#e4c15c"/><path d="M7.3 5.6L10.9 8.6M5.9 7.3L9.8 10.8" stroke="#b87a22" stroke-width="0.9"/></svg>
<svg style="left:484px;top:5px" width="17" height="13" viewBox="0 0 17 13"><path d="M3.2 5.2A5 5 0 0 1 12.6 4.2M13.8 7.8A5 5 0 0 1 4.4 8.8" fill="none" stroke="#2a9be6" stroke-width="1.7"/><path d="M0 5.4H4.5M12.5 7.6H17" stroke="#2a9be6" stroke-width="1.7"/><circle cx="8.5" cy="6.5" r="2.2" fill="#2a9be6"/></svg>
<span class="t" style="left:505px;top:3px;font-size:12px;letter-spacing:-0.25px;">Publish</span>
<svg style="left:555px;top:10px" width="5" height="3"><path d="M0 0H5L2.5 2.7Z" fill="#e6e9ec" fill-opacity=".9"/></svg>
<div class="sep" style="left:568px;top:2px;height:16px"></div>
<svg style="left:577px;top:4px" width="15" height="15" viewBox="0 0 15 15"><path d="M12.6 9.2A5.1 5.1 0 1 1 9.6 3.2" fill="none" stroke="#c9d3de" stroke-width="3"/><path d="M7.6 0.6L14.6 0.2L14.2 7Z" fill="#c9d3de"/></svg>
</div>
<svg style="left:0;top:45px" width="598" height="356" viewBox="759 374 598 356" font-family="Liberation Sans,sans-serif" font-size="16" fill="#000"><rect x="759" y="374" width="598" height="356" fill="#fff"/><g fill="none" stroke="#000" stroke-width="1"><circle cx="855.4" cy="625.5" r="2.95"/><circle cx="855.4" cy="614.2" r="2.95"/><circle cx="918.7" cy="622.7" r="2.95"/><circle cx="918.7" cy="597.4" r="2.95"/><circle cx="939.9" cy="605.8" r="2.95"/><circle cx="961.0" cy="614.2" r="2.95"/><circle cx="982.1" cy="603.0" r="2.95"/><circle cx="982.1" cy="591.7" r="2.95"/><circle cx="982.1" cy="580.5" r="2.95"/><circle cx="1003.2" cy="604.4" r="2.95"/><circle cx="1003.2" cy="588.9" r="2.95"/><circle cx="1024.3" cy="608.6" r="2.95"/><circle cx="1024.3" cy="600.2" r="2.95"/><circle cx="1024.3" cy="594.6" r="2.95"/><circle cx="1024.3" cy="588.9" r="2.95"/><circle cx="1045.5" cy="591.7" r="2.95"/><circle cx="1045.5" cy="580.5" r="2.95"/><circle cx="1045.5" cy="580.5" r="2.95"/><circle cx="1045.5" cy="563.6" r="2.95"/><circle cx="1066.6" cy="591.7" r="2.95"/><circle cx="1066.6" cy="577.7" r="2.95"/><circle cx="1066.6" cy="543.9" r="2.95"/><circle cx="1066.6" cy="515.8" r="2.95"/><circle cx="1087.7" cy="600.2" r="2.95"/><circle cx="1087.7" cy="591.7" r="2.95"/><circle cx="1087.7" cy="552.4" r="2.95"/><circle cx="1108.8" cy="583.3" r="2.95"/><circle cx="1108.8" cy="572.1" r="2.95"/><circle cx="1129.9" cy="583.3" r="2.95"/><circle cx="1129.9" cy="572.1" r="2.95"/><circle cx="1129.9" cy="558.0" r="2.95"/><circle cx="1151.1" cy="569.2" r="2.95"/><circle cx="1151.1" cy="549.6" r="2.95"/><circle cx="1151.1" cy="521.4" r="2.95"/><circle cx="1151.1" cy="510.2" r="2.95"/><circle cx="1172.2" cy="577.7" r="2.95"/><circle cx="1172.2" cy="563.6" r="2.95"/><circle cx="1172.2" cy="532.7" r="2.95"/><circle cx="1193.3" cy="583.3" r="2.95"/><circle cx="1193.3" cy="560.8" r="2.95"/><circle cx="1193.3" cy="555.2" r="2.95"/><circle cx="1193.3" cy="549.6" r="2.95"/><circle cx="1193.3" cy="538.3" r="2.95"/><circle cx="1235.5" cy="535.5" r="2.95"/><circle cx="1256.7" cy="552.4" r="2.95"/><circle cx="1277.8" cy="529.9" r="2.95"/><circle cx="1277.8" cy="498.9" r="2.95"/><circle cx="1277.8" cy="497.5" r="2.95"/><circle cx="1277.8" cy="459.6" r="2.95"/><circle cx="1298.9" cy="508.8" r="2.95"/><g shape-rendering="crispEdges"><rect x="837.5" y="452.5" width="479" height="180"/><path d="M876.5 632.5H1298.9M876.5 632.5V642M982.1 632.5V642M1087.7 632.5V642M1193.3 632.5V642M1298.9 632.5V642"/><path d="M837.5 628.3V459.6M837.5 628.3H828M837.5 600.2H828M837.5 572.1H828M837.5 543.9H828M837.5 515.8H828M837.5 487.7H828M837.5 459.6H828"/></g></g><rect x="962" y="476" width="246" height="43.8" fill="#fff"/><text x="876.5" y="666.7" text-anchor="middle">5</text><text x="982.1" y="666.7" text-anchor="middle">10</text><text x="1087.7" y="666.7" text-anchor="middle">15</text><text x="1193.3" y="666.7" text-anchor="middle">20</text><text x="1298.9" y="666.7" text-anchor="middle">25</text><text transform="translate(815.3 628.3) rotate(-90)" text-anchor="middle">0</text><text transform="translate(815.3 600.2) rotate(-90)" text-anchor="middle">20</text><text transform="translate(815.3 543.9) rotate(-90)" text-anchor="middle">60</text><text transform="translate(815.3 487.7) rotate(-90)" text-anchor="middle">100</text><text x="1077" y="705.4" text-anchor="middle">speed</text><text transform="translate(778 542.5) rotate(-90)" text-anchor="middle">dist</text><text transform="translate(976.5 513.1) scale(0.9118 1)" font-size="26.8" font-weight="bold" fill="#ed1c24" stroke="#ed1c24" stroke-width="0.3">PLOTS AND FILES</text></svg>
</div>
<div class="lab" style="left:168px;top:222px;width:257px;height:70px"><span style="left:17.30000000000001px;top:12.6px;font-size:34.7px;line-height:34.7px;transform:scaleX(0.9278);transform-origin:0 0;-webkit-text-stroke:0.4px #ed1c24">CODE EDITOR</span></div>
<div class="lab" style="left:164px;top:537.5px;width:259px;height:61px"><span style="left:52.19999999999999px;top:12.5px;font-size:34.7px;line-height:34.7px;transform:scaleX(0.9022);transform-origin:0 0;-webkit-text-stroke:0.4px #ed1c24">CONSOLE</span></div>
<div class="lab" style="left:932px;top:169px;width:318px;height:65px"><span style="left:25.700000000000045px;top:10.8px;font-size:27px;line-height:27px;transform:scaleX(0.9835);transform-origin:0 0;-webkit-text-stroke:0.3px #ed1c24">Workspace &amp; History</span></div>
</body>
</html>
